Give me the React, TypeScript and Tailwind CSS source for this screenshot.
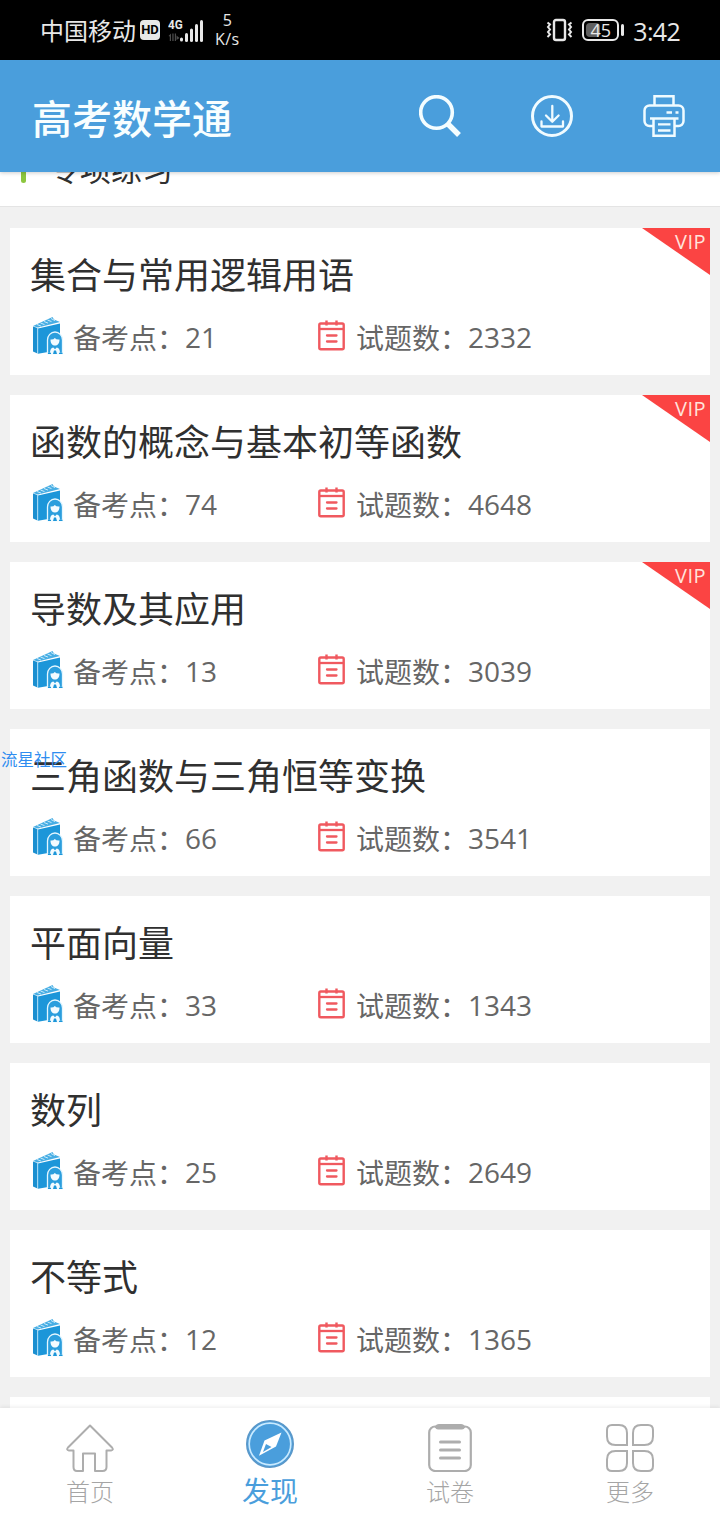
import clsx from "clsx";
import { ReactNode } from "react";

type Topic = {
  name: string;
  points: number;
  questions: number;
  vip?: boolean;
};

const topics: Topic[] = [
  { name: "集合与常用逻辑用语", points: 21, questions: 2332, vip: true },
  { name: "函数的概念与基本初等函数", points: 74, questions: 4648, vip: true },
  { name: "导数及其应用", points: 13, questions: 3039, vip: true },
  { name: "三角函数与三角恒等变换", points: 66, questions: 3541 },
  { name: "平面向量", points: 33, questions: 1343 },
  { name: "数列", points: 25, questions: 2649 },
  { name: "不等式", points: 12, questions: 1365 },
];

function SignalIcon() {
  return (
    <svg width="36" height="26" viewBox="0 0 36 26" fill="#e8e8e8">
      <path d="M0.500 19 3 16.500V24H1.800v-4.500zM4.300 16.500h1.300V24H4.300zM6.800 16.500H8V24H6.800zM8.500 18.500l3 2.500-3 2z" fill="#4c4c4c" />
      <rect x="12" y="20.500" width="3" height="4" rx="1.500" />
      <rect x="17" y="16" width="3" height="9" rx="1.500" />
      <rect x="22" y="11.500" width="3" height="13.500" rx="1.500" />
      <rect x="27" y="7" width="3" height="18" rx="1.500" />
      <rect x="32" y="3" width="3" height="22" rx="1.500" />
    </svg>
  );
}

function VibrateIcon() {
  return (
    <svg width="28" height="24" viewBox="0 0 28 24" fill="none" stroke="#e8e8e8" strokeWidth="2">
      <rect x="8" y="2" width="11" height="20" rx="2" strokeWidth="2.400" />
      <path d="M1.500 4.500 4 6.500 2 9l2 2.500L2 14l2 2.500-2.500 2.500" />
      <path d="M25.500 4.500 23 6.500 25 9l-2 2.500 2 2.500-2 2.500 2.500 2.500" />
    </svg>
  );
}

function StatusBar() {
  return (
    <div className="flex h-[60px] shrink-0 items-center justify-between bg-black pl-10 pr-10 text-[#e8e8e8]">
      <div className="flex items-center">
        <span className="pt-0.5 text-2xl leading-6">中国移动</span>
        <span className="ml-1 flex h-5 w-5 items-center justify-center rounded bg-[#e8e8e8] font-[Roboto] text-[13px] font-bold text-black">
          HD
        </span>
        <div className="relative ml-2 h-[26px] w-9">
          <SignalIcon />
          <span className="absolute left-0 top-0.5 origin-left scale-x-90 font-[Roboto] text-[13px] font-bold leading-3">4G</span>
        </div>
        <div className="ml-[11px] flex flex-col items-center text-base leading-[19px]">
          <span>5</span>
          <span className="tracking-[0.4px]">K/s</span>
        </div>
      </div>
      <div className="flex items-center">
        <VibrateIcon />
        <div className="relative ml-2 flex h-[22px] w-[37px] items-center justify-center rounded-md border-2 border-[#e8e8e8]">
          <div className="absolute left-0.5 top-0.5 h-3.5 w-3.5 rounded-sm bg-[#606060]" />
          <span className="relative text-lg leading-none">45</span>
        </div>
        <div className="ml-0.5 h-3 w-[3px] rounded-full bg-[#e8e8e8]" />
        <span className="ml-[9px] pt-px text-[25px] leading-6 tracking-[-0.7px]">3:42</span>
      </div>
    </div>
  );
}

function SearchIcon() {
  return (
    <svg width="42" height="42" viewBox="0 0 42 42" fill="none" stroke="#f4fdff">
      <circle cx="17.500" cy="17.500" r="15.800" strokeWidth="3.600" />
      <path d="M28.500 28.500 40 40" strokeWidth="5.400" />
    </svg>
  );
}

function DownloadIcon() {
  return (
    <svg width="42" height="42" viewBox="0 0 42 42" fill="none" stroke="#f0fbff" strokeLinecap="round" strokeLinejoin="round">
      <circle cx="21" cy="21" r="19.500" strokeWidth="3" />
      <path d="M21.300 11v15.500M15 20.500l6.300 6.200 6.300-6.200" strokeWidth="2.300" />
      <path d="M10.500 26.500v5h21.500v-5" strokeWidth="2.300" />
    </svg>
  );
}

function PrintIcon() {
  return (
    <svg width="42" height="42" viewBox="0 0 42 42" fill="none" stroke="#f0fbff" strokeWidth="2.500">
      <path d="M11.500 10V1.300h19V10" />
      <path d="M10 31H6.500a5 5 0 0 1-5-5V15.500a5 5 0 0 1 5-5h29a5 5 0 0 1 5 5V26a5 5 0 0 1-5 5H32" />
      <path d="M7 23.500h28.500" />
      <path d="M10.500 23.500v17.200h21V23.500" />
      <path d="M15 29.300h12.500M15 35.500h12.500M23.500 17.500h5.500M32.500 17.500h3" strokeWidth="2.300" />
    </svg>
  );
}

function Header() {
  return (
    <header className="relative z-10 flex h-28 shrink-0 items-center justify-between bg-[#4a9edc] pl-8 pr-[35px] shadow-[0_1px_4px_rgba(0,0,0,0.2)]">
      <h1 className="pt-1.5 text-[40px] font-medium leading-10 text-[#f8feff]">高考数学通</h1>
      <div className="flex gap-[70px]">
        <SearchIcon />
        <DownloadIcon />
        <PrintIcon />
      </div>
    </header>
  );
}

function BookIcon() {
  return (
    <svg width="32" height="40" viewBox="0 0 32 40">
      <path d="M1 10.500 5.500 12v25.500L1 35.500z" fill="#1b8fd0" />
      <path d="M6 12.500 28 7.500v26.500L6 37.700z" fill="#1c96d9" />
      <path d="M1 10 20.500 1l1.500 2.500 6 2.500L6 11.500z" fill="#48aee4" />
      <path d="M5 8.500l4 1.600M8.500 7l4 1.600M12 5.500l4 1.600M15.500 4l4 1.600M19 2.500l4 2.100" stroke="#c9eafa" strokeWidth="1" />
      <path d="M5.700 12v25.500" stroke="#a5daf5" strokeWidth="1" />
      <path d="M15.500 37.500V24a7.500 8 0 0 1 15 0v13.500z" fill="#2b9edd" stroke="#e4f6ff" strokeWidth="1.300" />
      <path d="M18.500 23.500q3 .3 4.300-1.500 1.500 1.800 4.700 1.500c0 4-1.900 6-4.500 6s-4.500-2-4.500-6z" fill="#f3fbff" />
      <path d="M18 37.500c0-3.500 1-5.800 3.300-6l1.700 1.800 1.700-1.800c2.300.2 3.300 2.500 3.300 6z" fill="#f3fbff" />
      <path d="M22 34.500h2l1 3.500h-4zM16 36.800h3v1.200h-3zM27 36.800h3.500v1.200H27z" fill="#1c96d9" />
    </svg>
  );
}

function QuestionIcon() {
  return (
    <svg width="27" height="32" viewBox="0 0 27 32" fill="none" stroke="#f0595f">
      <rect x="1.300" y="3.500" width="24.400" height="25.800" rx="1.500" strokeWidth="2.400" />
      <path d="M1.500 9h24" strokeWidth="2.300" />
      <path d="M8.500.5v5M18.500.5v5" strokeWidth="2.400" />
      <path d="M9 15.500h9.500M9 21.500h9.500" strokeWidth="2.300" strokeLinecap="round" />
    </svg>
  );
}

function Stat({ label, value }: { label: string; value: number }) {
  return (
    <div className="flex">
      <span className="pt-[3px]">{label}：</span>
      <span className="pt-0.5">{value}</span>
    </div>
  );
}

function TopicCard({ topic }: { topic: Topic }) {
  return (
    <div className="relative h-[147px] shrink-0 bg-white pl-5 pt-[30px]">
      {topic.vip && (
        <div className="absolute right-0 top-0 h-[47px] w-[68px]">
          <svg className="absolute inset-0" width="68" height="47" viewBox="0 0 68 47">
            <path d="M0 0H68V47z" fill="#fb4443" />
          </svg>
          <span className="absolute right-1 top-1 text-xl leading-5 tracking-[0.5px] text-[#ffe3dc]">VIP</span>
        </div>
      )}
      <h2 className="text-[36px] leading-9 text-[#303030]">{topic.name}</h2>
      <div className="mt-[22px] flex h-10 items-center text-[28px] leading-7 text-[#666]">
        <div className="flex w-[288px] items-center gap-[9px] pl-0.5">
          <BookIcon />
          <Stat label="备考点" value={topic.points} />
        </div>
        <div className="flex items-center gap-[11px]">
          <QuestionIcon />
          <Stat label="试题数" value={topic.questions} />
        </div>
      </div>
    </div>
  );
}

function HomeIcon() {
  return (
    <svg width="48" height="48" viewBox="0 0 48 48" fill="none" stroke="#adadad" strokeWidth="2" strokeLinejoin="round">
      <path d="M24 1.500 46 23.500q2 2.500-1 3h-4.500V43q0 4-4 4H29V29.500H17V47h-6q-3.500 0-3.500-4V26.500H3q-3-.5-1-3z" />
    </svg>
  );
}

function DiscoverIcon() {
  return (
    <svg width="48" height="48" viewBox="0 0 48 48">
      <circle cx="24" cy="24" r="23.200" fill="#4a9edc" stroke="#5b98c9" strokeWidth="1.600" />
      <circle cx="24" cy="24" r="20.800" fill="none" stroke="#c9eaff" strokeWidth="1.700" />
      <path d="M35.500 12.500 30 26.500l-17 9.300L18.500 20.500z" fill="#fff" />
      <path d="M20 24 25.500 27l-8.500 5z" fill="#4a9edc" />
    </svg>
  );
}

function PaperIcon() {
  return (
    <svg width="44" height="48" viewBox="0 0 44 48" fill="none" stroke="#adadad" strokeLinecap="round">
      <rect x="1.200" y="2.500" width="41.600" height="44.500" rx="6" strokeWidth="2.200" />
      <path d="M7 3Q8 0 11 0H33Q36 0 37 3V3.500Q36 5.500 34 5.500H10Q8 5.500 7 3.500z" fill="#adadad" stroke="none" />
      <path d="M12.500 18h19M12.500 26h19M12.500 34h19" strokeWidth="3" />
    </svg>
  );
}

function MoreIcon() {
  return (
    <svg width="48" height="48" viewBox="0 0 48 48" fill="none" stroke="#adadad" strokeWidth="2">
      <path d="M21 21H9.500Q1 21 1 12.500V6q0-5 5-5h7q8 0 8 8z" />
      <path d="M27 21h11.500q8.500 0 8.500-8.500V6q0-5-5-5h-7q-8 0-8 8z" />
      <path d="M21 27H9.500Q1 27 1 35.500V42q0 5 5 5h7q8 0 8-8z" />
      <path d="M27 27h11.500q8.500 0 8.500 8.500V42q0 5-5 5h-7q-8 0-8-8z" />
    </svg>
  );
}

function NavItem({ icon, label, active }: { icon: ReactNode; label: string; active?: boolean }) {
  return (
    <div className={clsx("flex flex-1 flex-col items-center", active ? "pt-3 text-[#4a9edc]" : "pt-4 text-[#a5a5a5]")}>
      {icon}
      <span className={clsx(active ? "mt-[9px] text-[28px] leading-7" : "mt-2 text-2xl font-light leading-6")}>{label}</span>
    </div>
  );
}

export default function App() {
  return (
    <div className="relative flex h-[1520px] w-[720px] flex-col overflow-hidden bg-[#f1f1f1] font-['Open_Sans','Noto_Sans_CJK_SC',sans-serif]">
      <StatusBar />
      <Header />

      <main className="min-h-0 flex-1 overflow-hidden">
        <div className="-mt-10 flex h-[75px] items-center border-b border-[#e4e4e4] bg-white pl-[21px]">
          <div className="h-7 w-[5px] rounded-full bg-[#8cc63f]" />
          <span className="ml-[23px] text-[31px] leading-8 text-[#303030]">专项练习</span>
        </div>
        <div className="mt-[21px] flex flex-col gap-5 px-2.5">
          {topics.map((topic) => (
            <TopicCard key={topic.name} topic={topic} />
          ))}
          <div className="h-[147px] shrink-0 bg-white" />
        </div>
      </main>

      <nav className="relative z-10 flex h-28 shrink-0 bg-white shadow-[0_-1px_4px_rgba(0,0,0,0.08)]">
        <NavItem icon={<HomeIcon />} label="首页" />
        <NavItem icon={<DiscoverIcon />} label="发现" active />
        <NavItem icon={<PaperIcon />} label="试卷" />
        <NavItem icon={<MoreIcon />} label="更多" />
      </nav>

      <span className="absolute left-px top-[752px] z-20 text-[16.5px] leading-4 text-[#2f8df0]">流星社区</span>
    </div>
  );
}
